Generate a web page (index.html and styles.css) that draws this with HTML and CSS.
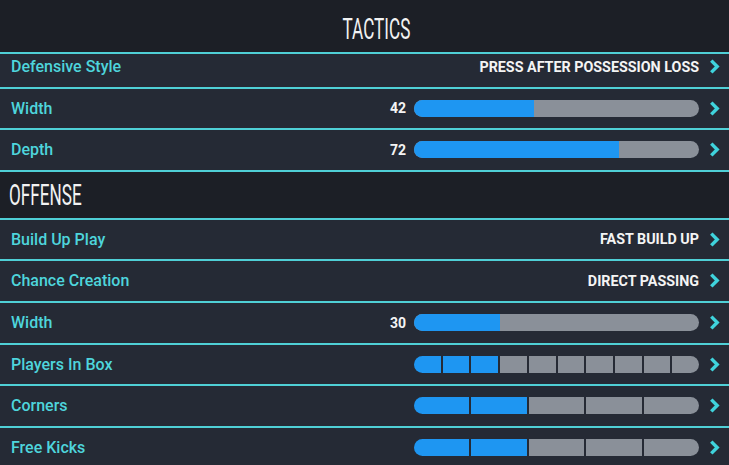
FILE: index.html
```html
<!DOCTYPE html>
<html>
<head>
<meta charset="utf-8">
<link rel="stylesheet" href="styles.css">
</head>
<body>
<div class="page">
  <div class="title-bar"><span class="title">TACTICS</span></div>

  <div class="row row-first">
    <span class="label">Defensive Style</span>
    <div class="right">
      <span class="value">PRESS AFTER POSSESSION LOSS</span>
      <svg class="chev" viewBox="0 0 10 14"><path d="M2 1.5 L7.5 7 L2 12.5"/></svg>
    </div>
  </div>
  <div class="row">
    <span class="label">Width</span>
    <div class="right">
      <span class="num">42</span>
      <div class="bar"><div class="fill" style="width:42%"></div></div>
      <svg class="chev" viewBox="0 0 10 14"><path d="M2 1.5 L7.5 7 L2 12.5"/></svg>
    </div>
  </div>
  <div class="row row-tall">
    <span class="label">Depth</span>
    <div class="right">
      <span class="num">72</span>
      <div class="bar"><div class="fill" style="width:72%"></div></div>
      <svg class="chev" viewBox="0 0 10 14"><path d="M2 1.5 L7.5 7 L2 12.5"/></svg>
    </div>
  </div>

  <div class="section"><span class="title title-left">OFFENSE</span></div>

  <div class="row">
    <span class="label">Build Up Play</span>
    <div class="right">
      <span class="value">FAST BUILD UP</span>
      <svg class="chev" viewBox="0 0 10 14"><path d="M2 1.5 L7.5 7 L2 12.5"/></svg>
    </div>
  </div>
  <div class="row row-tall">
    <span class="label">Chance Creation</span>
    <div class="right">
      <span class="value">DIRECT PASSING</span>
      <svg class="chev" viewBox="0 0 10 14"><path d="M2 1.5 L7.5 7 L2 12.5"/></svg>
    </div>
  </div>
  <div class="row row-tall">
    <span class="label">Width</span>
    <div class="right">
      <span class="num">30</span>
      <div class="bar"><div class="fill" style="width:30%"></div></div>
      <svg class="chev" viewBox="0 0 10 14"><path d="M2 1.5 L7.5 7 L2 12.5"/></svg>
    </div>
  </div>
  <div class="row">
    <span class="label">Players In Box</span>
    <div class="right">
      <div class="segs">
        <div class="seg on"></div><div class="seg on"></div><div class="seg on"></div>
        <div class="seg"></div><div class="seg"></div><div class="seg"></div><div class="seg"></div>
        <div class="seg"></div><div class="seg"></div><div class="seg"></div>
      </div>
      <svg class="chev" viewBox="0 0 10 14"><path d="M2 1.5 L7.5 7 L2 12.5"/></svg>
    </div>
  </div>
  <div class="row row-tall">
    <span class="label">Corners</span>
    <div class="right">
      <div class="segs">
        <div class="seg on"></div><div class="seg on"></div>
        <div class="seg"></div><div class="seg"></div><div class="seg"></div>
      </div>
      <svg class="chev" viewBox="0 0 10 14"><path d="M2 1.5 L7.5 7 L2 12.5"/></svg>
    </div>
  </div>
  <div class="row">
    <span class="label">Free Kicks</span>
    <div class="right">
      <div class="segs">
        <div class="seg on"></div><div class="seg on"></div>
        <div class="seg"></div><div class="seg"></div><div class="seg"></div>
      </div>
      <svg class="chev" viewBox="0 0 10 14"><path d="M2 1.5 L7.5 7 L2 12.5"/></svg>
    </div>
  </div>
</div>
</body>
</html>
```

FILE: styles.css
```css
html, body {
  margin: 0;
  padding: 0;
  background: #1c1f26;
  overflow: hidden;
}

.page {
  width: 729px;
  height: 465px;
  overflow: hidden;
  display: flex;
  flex-direction: column;
  font-family: Roboto, "Liberation Sans", sans-serif;
}

.title-bar {
  height: 52px;
  box-sizing: border-box;
  padding-top: 5px;
  padding-left: 23px;
  flex: none;
  display: flex;
  align-items: center;
  justify-content: center;
  background: #1c1f26;
}

.title {
  display: inline-block;
  font-family: Roboto, "Liberation Sans", sans-serif;
  font-size: 26px;
  font-weight: 400;
  color: #f2f2f2;
  transform: scale(0.66, 1.1);
  line-height: 1;
}

.section {
  height: 46px;
  flex: none;
  display: flex;
  align-items: center;
  padding-left: 9px;
  background: #1c1f26;
  border-top: 2px solid #4fcfd6;
}

.title-left {
  transform-origin: left center;
}

.row {
  flex: none;
  box-sizing: border-box;
  height: 41px;
  display: flex;
  align-items: center;
  justify-content: space-between;
  padding: 0 9px 1px 11px;
  background: #252a35;
  border-top: 2px solid #4fcfd6;
}

.row-tall {
  height: 42px;
}

.row-first {
  height: 35px;
  padding-bottom: 8px;
}

.label {
  color: #4ed5dc;
  font-size: 16px;
  font-weight: 500;
}

.right {
  display: flex;
  align-items: center;
}

.value {
  color: #f4f4f4;
  font-size: 14.3px;
  font-weight: 700;
  margin-right: 10px;
}

.num {
  color: #f4f4f4;
  font-size: 14px;
  font-weight: 700;
  margin-right: 8px;
}

.bar {
  width: 285px;
  height: 17px;
  border-radius: 9px;
  background: #8a9099;
  overflow: hidden;
  margin-right: 10px;
}

.fill {
  height: 100%;
  background: #1e96f2;
}

.segs {
  width: 285px;
  height: 17px;
  border-radius: 9px;
  overflow: hidden;
  display: flex;
  gap: 2px;
  margin-right: 10px;
}

.seg {
  flex: 1;
  background: #8a9099;
}

.seg.on {
  background: #1e96f2;
}

.chev {
  width: 11px;
  height: 15px;
  display: block;
}

.chev path {
  fill: none;
  stroke: #3fd3dc;
  stroke-width: 3.2;
}
```
